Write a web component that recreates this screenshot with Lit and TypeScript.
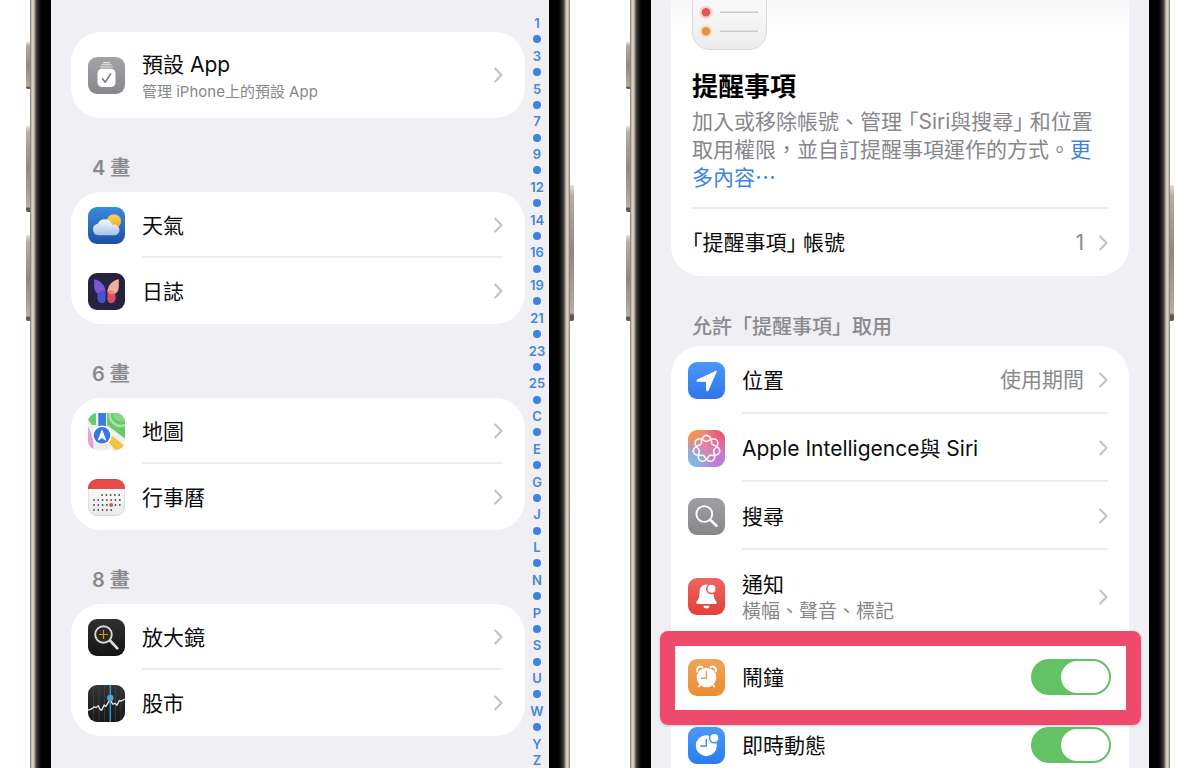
import { LitElement, html, svg, css, nothing, TemplateResult, SVGTemplateResult } from "lit";
import { customElement, property } from "lit/decorators.js";

/* Seven-lobed knot, traced twice around its centre. */
const knotPath = (() => {
  const points: string[] = [];
  const steps = 280;
  for (let i = 0; i < steps; i++) {
    const angle = (i / steps) * Math.PI * 4;
    const radius = 10.4 + 3 * Math.cos(3.5 * angle);
    const x = 18.5 + radius * Math.sin(angle);
    const y = 18.8 - radius * Math.cos(angle);
    points.push(`${x.toFixed(2)} ${y.toFixed(2)}`);
  }
  return `M${points.join("L")}Z`;
})();

const calendarDots = (() => {
  const rows = [[14, 17], [6, 22], [6, 27], [6, 32]];
  const dots: SVGTemplateResult[] = [];
  rows.forEach(([start, y], row) => {
    for (let x = start; x <= 32; x += 4.3) {
      if (row === 3 && x > 25) break;
      const today = row === 2 && Math.abs(x - 23.2) < 1;
      dots.push(svg`<circle cx=${x} cy=${y - 1} r=${today ? 2 : 0.9} fill=${today ? "#e0514d" : "#4a4a4c"}></circle>`);
    }
  });
  return dots;
})();

const tile = (fill: string) => svg`<rect width="37" height="37" rx="9" fill=${fill}></rect>`;

const icons: Record<string, SVGTemplateResult> = {
  defaults: svg`
    <linearGradient id="g" x2="0" y2="1"><stop stop-color="#a3a3a7"></stop><stop offset="1" stop-color="#88888c"></stop></linearGradient>
    ${tile("url(#g)")}
    <path d="M15.500 5.600h6M13.800 7.800h9.400M12.300 10h12.400" stroke="#fff" stroke-width="1.100" stroke-linecap="round" opacity=".75"></path>
    <rect x="9.500" y="11.700" width="18" height="18.300" rx="4.500" fill="#fff"></rect>
    <path d="M14.500 21.700l2.800 3.500 5.300-8.200" fill="none" stroke="#77777b" stroke-width="1.500" stroke-linecap="round" stroke-linejoin="round"></path>`,
  weather: svg`
    <linearGradient id="g" x2="0" y2="1"><stop stop-color="#3a8bdc"></stop><stop offset="1" stop-color="#1c4fa6"></stop></linearGradient>
    <linearGradient id="c" x2="0" y2="1"><stop stop-color="#fff"></stop><stop offset="1" stop-color="#abc5ec"></stop></linearGradient>
    <linearGradient id="s" x2="0" y2="1"><stop stop-color="#f9d45b"></stop><stop offset="1" stop-color="#edaa35"></stop></linearGradient>
    ${tile("url(#g)")}
    <circle cx="26" cy="14.200" r="7" fill="url(#s)"></circle>
    <path d="M10.500 28.200a5.800 5.800 0 0 1-.7-11.500 7.700 7.700 0 0 1 14.500 1.300 5.300 5.300 0 1 1 1.200 10.200z" fill="url(#c)" opacity=".96"></path>`,
  journal: svg`
    ${tile("#25233d")}
    <path d="M17.600 18.500C17.200 12.500 12.700 7 6.200 6.200v7.300c0 4 1.700 6.500 4.300 7.500 2.500.7 5.600.4 7.100-2.500z" fill="#7a55d8"></path>
    <path d="M17.600 18.500c-2.600-2-8-.6-8.300 5.500-.2 4.700 3 6.900 5.900 6 1.900-.7 2.400-2.400 2.400-4.500z" fill="#3f57d3"></path>
    <path d="M19.400 18.500C19.800 12.500 24.300 7 30.800 6.200v7.300c0 4-1.700 6.500-4.300 7.500-2.500.7-5.600.4-7.100-2.500z" fill="#f1ae9f"></path>
    <path d="M19.400 18.500c2.600-2 8-.6 8.300 5.500.2 4.700-3 6.900-5.900 6-1.900-.7-2.400-2.400-2.400-4.500z" fill="#d84d61"></path>
    <path d="M19.400 18.500c1.600-1.200 4.400-1.200 6.300.6l1 1.900c-2.700.7-5.800.4-7.300-2.500z" fill="#ee8583"></path>
    <path d="M17.600 18.500c-1.600-1.200-4.400-1.200-6.300.6l-1 1.900c2.700.7 5.800.4 7.300-2.500z" fill="#5b48c9"></path>`,
  maps: svg`
    <clipPath id="k">${tile("#000")}</clipPath>
    <g clip-path="url(#k)">
      <rect width="37" height="37" fill="#eeeeec"></rect>
      <path d="M19 0h18v25.500L19 12z" fill="#68c96d"></path>
      <path d="M0 0h8v12H4L0 7z" fill="#68c96d"></path>
      <path d="M22 0a11 11 0 0 0 15 12" fill="none" stroke="#a9e2a6" stroke-width="2.500"></path>
      <path d="M25 0a8 8 0 0 0 12 7.500V0z" fill="#8ad58b"></path>
      <path d="M10.300 0h7.700v15h-7.700z" fill="#3b7ee2"></path>
      <path d="M0 13.500c3 5 5.500 12 5.500 23.500H0z" fill="#e6a0dd"></path>
      <path d="M23 22l13 10-2 5H19l-1-8z" fill="#f3c443"></path>
      <path d="M18 12.500L37 27v6L17 17z" fill="#f4f3f1"></path>
      <path d="M19 27l8 10h-8z" fill="#f4f3f1"></path>
      <circle cx="14" cy="22.300" r="9.800" fill="#fff"></circle>
      <circle cx="14" cy="22.300" r="8.300" fill="#3478e0"></circle>
      <path d="M14 16.200l4.200 10.600c.2.600-.3.900-.8.600L14 25l-3.400 2.400c-.5.300-1 0-.8-.6z" fill="#fff"></path>
    </g>`,
  calendar: svg`
    <linearGradient id="g" x2="0" y2="1"><stop stop-color="#fff"></stop><stop offset="1" stop-color="#e9e9e9"></stop></linearGradient>
    ${tile("url(#g)")}
    <path d="M0 10V9a9 9 0 0 1 9-9h19a9 9 0 0 1 9 9v1z" fill="#e64b48"></path>
    <rect x=".500" y=".500" width="36" height="36" rx="8.500" fill="none" stroke="#000" stroke-opacity=".08"></rect>
    ${calendarDots}`,
  magnifier: svg`
    <linearGradient id="g" x2="0" y2="1"><stop stop-color="#303030"></stop><stop offset="1" stop-color="#141414"></stop></linearGradient>
    ${tile("url(#g)")}
    <path d="M22 21.500l7.300 7.800" stroke="#dcdcdc" stroke-width="2.700" stroke-linecap="round"></path>
    <circle cx="15.500" cy="15.500" r="8.300" fill="#2c281d" stroke="#d9d9d9" stroke-width="1.900"></circle>
    <path d="M15.500 11v9M11 15.500h9" stroke="#c89b2d" stroke-width="1.200"></path>`,
  stocks: svg`
    <linearGradient id="g" x2="0" y2="1"><stop stop-color="#333436"></stop><stop offset="1" stop-color="#161617"></stop></linearGradient>
    ${tile("url(#g)")}
    <path d="M5.500 1v35M11 0v37M16.500 0v37M27.500 0v37M33 2v33" stroke="#4b4c4f" stroke-width=".800" opacity=".7"></path>
    <path d="M22.300 0v37" stroke="#3b94c9" stroke-width="1.500"></path>
    <path d="M0 25l2.500-.6 1.700-1 2-1.600 2 .8 2-2 1.600 3.500 1.700 1.300 2.800-5.500 1.700 1.500 2.600-4.500 1.600-2.300 2.600 4.600 2.600-.8 1.400 2 2.700-5 1.600.7L37 14" fill="none" stroke="#e4e4e4" stroke-width="1.300" stroke-linejoin="round"></path>
    <circle cx="22.300" cy="13" r="3.200" fill="#4aa7da"></circle>`,
  location: svg`
    <linearGradient id="g" x2="0" y2="1"><stop stop-color="#4a97f8"></stop><stop offset="1" stop-color="#2f76ea"></stop></linearGradient>
    ${tile("url(#g)")}
    <path d="M27.500 9L9.300 17.400c-1.300.7-1.100 2.200.4 2.300l8.200.3.300 8c.1 1.500 1.700 1.800 2.300.4L28.600 10c.3-.8-.3-1.400-1.100-1z" fill="#fff"></path>`,
  intelligence: svg`
    <linearGradient id="g" x2="1" y2="1"><stop stop-color="#f0a13c"></stop><stop offset=".4" stop-color="#ea8290"></stop><stop offset="1" stop-color="#b376f0"></stop></linearGradient>
    <radialGradient id="b" cx="0" cy="1" r=".8"><stop stop-color="#62cdf2"></stop><stop offset=".5" stop-color="#84b2e4" stop-opacity=".8"></stop><stop offset="1" stop-color="#9f9ed8" stop-opacity="0"></stop></radialGradient>
    <radialGradient id="r" cx="1" cy="0" r=".6"><stop stop-color="#ea4a6d"></stop><stop offset="1" stop-color="#ea4a6d" stop-opacity="0"></stop></radialGradient>
    ${tile("url(#g)")}${tile("url(#r)")}${tile("url(#b)")}
    <path d=${knotPath} fill="none" stroke="#fff" stroke-width="1.600" opacity=".92"></path>`,
  search: svg`
    <linearGradient id="g" x2="0" y2="1"><stop stop-color="#a0a0a4"></stop><stop offset="1" stop-color="#87878b"></stop></linearGradient>
    ${tile("url(#g)")}
    <circle cx="16.300" cy="16" r="7.900" fill="none" stroke="#fff" stroke-width="1.900"></circle>
    <path d="M22.200 21.800l6.300 6" stroke="#fff" stroke-width="2.600" stroke-linecap="round"></path>`,
  notifications: svg`
    <linearGradient id="g" x2="0" y2="1"><stop stop-color="#ef6561"></stop><stop offset="1" stop-color="#e23f38"></stop></linearGradient>
    ${tile("url(#g)")}
    <path d="M18.500 6.500c-5 0-6.800 3.600-7 8.200-.2 5-1 6.500-2.600 8.400-1.200 1.400-.7 3 .8 3h17.600c1.500 0 2-1.600.8-3-1.600-1.900-2.400-3.400-2.600-8.400-.2-4.600-2-8.200-7-8.200z" fill="#fff"></path>
    <path d="M15.500 27.700h6a3 2.700 0 0 1-6 0z" fill="#fff"></path>
    <circle cx="23.500" cy="10.800" r="5.500" fill="#eb5853"></circle>
    <circle cx="23.500" cy="10.800" r="4" fill="#fff"></circle>`,
  alarm: svg`
    <linearGradient id="g" x2="0" y2="1"><stop stop-color="#f0a455"></stop><stop offset="1" stop-color="#eb8c33"></stop></linearGradient>
    ${tile("url(#g)")}
    <path d="M9.300 12.300a3.500 3.500 0 0 1 5-4.300M27.700 12.300a3.500 3.500 0 0 0-5-4.300" fill="none" stroke="#fff" stroke-width="2" stroke-linecap="round"></path>
    <circle cx="18.500" cy="18.500" r="9.800" fill="#fff"></circle>
    <path d="M12.500 25.500l-1.700 2M24.500 25.500l1.700 2" stroke="#fff" stroke-width="1.700" stroke-linecap="round"></path>
    <path d="M18.500 12.500v6.700h-5" fill="none" stroke="#ee9844" stroke-width="1.400" stroke-linecap="round" stroke-linejoin="round"></path>`,
  live: svg`
    <linearGradient id="g" x2="0" y2="1"><stop stop-color="#4a99f8"></stop><stop offset="1" stop-color="#2b7cf0"></stop></linearGradient>
    ${tile("url(#g)")}
    <circle cx="18.300" cy="18.700" r="10.500" fill="#fff"></circle>
    <path d="M18.300 12.500v6.500h-5.500" fill="none" stroke="#3a89f5" stroke-width="1.400" stroke-linecap="round" stroke-linejoin="round"></path>
    <circle cx="26.300" cy="11" r="5.500" fill="#4291f7"></circle>
    <circle cx="26.300" cy="11" r="4" fill="#fff"></circle>`,
};

const base = css`
  * { box-sizing: border-box; }
`;

@customElement("settings-row")
class SettingsRow extends LitElement {
  @property() icon = "";
  @property() label = "";
  @property() detail = "";
  @property() value = "";
  @property({ type: Boolean }) toggle = false;
  @property({ type: Boolean }) highlighted = false;

  static styles = [base, css`
    :host { display: block; position: relative; color: #0c0c0d; }
    .row {
      display: flex; align-items: stretch; min-height: var(--row-height, 66px);
      padding-left: 17px; color: inherit; text-decoration: none;
    }
    .icon { width: 37px; height: 37px; flex: none; align-self: center; margin-right: 17px; }
    .body {
      flex: 1; display: flex; align-items: center; margin-right: var(--row-end, 22px);
      border-bottom: 2px solid #ececee; border-top: 2px solid transparent;
    }
    :host(.last) .body, :host(.plain) .body { border-bottom-color: transparent; }
    .texts { flex: 1; padding-top: var(--text-drop, 2px); font-size: 21px; line-height: 28px; }
    .label { display: block; }
    .detail { display: block; font-size: var(--detail-size, 15px); line-height: 26px; color: #87878b; }
    .value { font-size: 21px; line-height: 28px; color: #8a8a8e; margin-right: 15px; }
    .chevron { width: 9px; height: 16px; flex: none; }
    .toggle {
      appearance: none; flex: none; width: 80px; height: 36px; margin: 0 -3px 0 0; padding: 2px;
      border-radius: 18px; background: #62c265; display: flex; justify-content: flex-end;
    }
    .toggle::before { content: ""; width: 48px; height: 32px; border-radius: 16px; background: #fff; }
    .toggle:not(:checked) { background: #e3e3e6; justify-content: flex-start; }
    .marker {
      position: absolute; z-index: 2; inset: -12px -12px -14px -11px; pointer-events: none;
      border: 15px solid #ee4b6c; border-radius: 8px; box-shadow: 0 1px 3px rgba(0, 0, 0, 0.18);
    }
  `];

  render() {
    const glyph = html`<svg class="icon" viewBox="0 0 37 37" aria-hidden="true">${icons[this.icon]}</svg>`;
    const detail = this.detail ? html`<span class="detail">${this.detail}</span>` : nothing;
    if (this.toggle) {
      return html`
        <div class="row">
          ${glyph}
          <div class="body">
            <div class="texts"><label class="label" for="switch">${this.label}</label>${detail}</div>
            <input class="toggle" id="switch" type="checkbox" role="switch" checked />
          </div>
        </div>
        ${this.highlighted ? html`<div class="marker"></div>` : nothing}`;
    }
    return html`
      <a class="row" href="#">
        ${glyph}
        <div class="body">
          <div class="texts"><span class="label">${this.label}</span>${detail}</div>
          ${this.value ? html`<span class="value">${this.value}</span>` : nothing}
          ${chevron()}
        </div>
      </a>`;
  }
}

function chevron(): TemplateResult {
  return html`<svg class="chevron" viewBox="0 0 9 16" aria-hidden="true">
    <path d="M1.200 1.500l6.300 6.500-6.300 6.500" fill="none" stroke="#c2c2c5" stroke-width="2" stroke-linecap="round" stroke-linejoin="round"></path>
  </svg>`;
}

@customElement("phone-frame")
class PhoneFrame extends LitElement {
  static styles = [base, css`
    :host { display: flex; min-width: 0; min-height: 0; padding: 0 30px; }
    .rail {
      position: relative; flex: none; width: 21px;
      background: linear-gradient(90deg, #77716a 0, #a9a297 1px, #d8d1c6 2px, #cfc8bc 4px, #817a70 5px, #35322f 7px, #1c1b1a 9px, #000 11px);
    }
    .rail.right { transform: scaleX(-1); }
    .key {
      position: absolute; left: -4px; width: 4px; border-radius: 2px 0 0 2px;
      background: linear-gradient(#e4dfd4 0, #b5ad9f 8%, #8f887c 50%, #b5ad9f 94%, #5e574c 96%);
    }
    .action { top: 42px; height: 47px; }
    .up { top: 126px; height: 86px; }
    .down { top: 235px; height: 86px; }
    .power { top: 185px; height: 136px; }
    .screen { flex: 1; min-width: 0; overflow: hidden; background: #efeff4; }
  `];

  render() {
    return html`
      <div class="rail"><i class="key action"></i><i class="key up"></i><i class="key down"></i></div>
      <div class="screen"><slot></slot></div>
      <div class="rail right"><i class="key power"></i></div>`;
  }
}

const groups = [
  { title: "4 畫", rows: [["weather", "天氣"], ["journal", "日誌"]] },
  { title: "6 畫", rows: [["maps", "地圖"], ["calendar", "行事曆"]] },
  { title: "8 畫", rows: [["magnifier", "放大鏡"], ["stocks", "股市"]] },
];

const indexMarks = ["1", "3", "5", "7", "9", "12", "14", "16", "19", "21", "23", "25",
  "C", "E", "G", "J", "L", "N", "P", "S", "U", "W", "Y"];

@customElement("app-root")
class AppRoot extends LitElement {
  static styles = [base, css`
    :host {
      display: grid; grid-template-columns: 1fr 1fr; grid-template-rows: minmax(0, 1fr);
      height: 100vh; overflow: hidden; background: #fff;
      font-family: Inter, "Noto Sans CJK TC", sans-serif;
    }
    .apps { display: flex; height: 100%; padding-left: 20px; }
    .list { flex: 1; min-width: 0; padding-top: 32px; }
    .card { background: #fff; border-radius: 30px; }
    .featured { --row-height: 86px; --text-drop: 6px; }
    h2 { margin: 0; padding: 36px 21px 10px; font-size: 20px; line-height: 28px; font-weight: 600; color: #8a8a8e; }
    .index {
      flex: none; width: 24px; padding-top: 15px; display: flex; flex-direction: column;
      justify-content: space-between; align-items: center;
    }
    .mark { font-size: 13px; line-height: 16px; font-weight: 600; color: #4586d8; text-decoration: none; }
    .dot { height: 16px; display: flex; align-items: center; }
    .dot::before { content: ""; width: 8px; height: 8px; border-radius: 50%; background: #3c83e4; }

    .detail-page { padding: 0 20px; }
    .hero { border-radius: 0 0 30px 30px; background: linear-gradient(#f8f8fa, #fff 40px); padding: 0 21px; }
    .app-icon { display: block; width: 75px; height: 50px; }
    h1 { margin: 0; padding-top: 20px; font-size: 26px; line-height: 34px; font-weight: 700; color: #000; }
    .about { margin: 0; padding: 4px 0 15px; font-size: 21px; line-height: 28px; color: #87878b; border-bottom: 2px solid #ececee; }
    .more { color: #3c83e4; text-decoration: none; font-family: "Noto Sans CJK TC", sans-serif; line-height: 20px; }
    .half { font-feature-settings: "halt"; }
    .account {
      display: flex; align-items: center; height: 67px; font-size: 21px; line-height: 28px;
      color: #0c0c0d; text-decoration: none;
    }
    .name { flex: 1; }
    .count { color: #8a8a8e; margin-right: 15px; }
    .chevron { width: 9px; height: 16px; flex: none; }
    .access { padding: 37px 21px 5px; font-weight: 500; }
    .permissions { --row-height: 68px; --detail-size: 19px; --row-end: 21px; border-radius: 30px 30px 0 0; }
    .tall { --row-height: 93px; }
  `];

  render() {
    return html`
      <phone-frame>
        <div class="apps">
          <div class="list">
            <div class="card featured">
              <settings-row class="last" icon="defaults" label="預設 App" detail="管理 iPhone上的預設 App"></settings-row>
            </div>
            ${groups.map((group) => html`
              <h2>${group.title}</h2>
              <div class="card">
                ${group.rows.map(([icon, label], i) => html`
                  <settings-row class=${i === group.rows.length - 1 ? "last" : ""} icon=${icon} label=${label}></settings-row>`)}
              </div>`)}
          </div>
          <nav class="index">
            ${indexMarks.map((mark, i) => html`
              <a class="mark" href="#">${mark}</a>
              ${i < indexMarks.length - 1 ? html`<span class="dot"></span>` : nothing}`)}
            <a class="mark" href="#">Z</a>
          </nav>
        </div>
      </phone-frame>

      <phone-frame>
        <div class="detail-page">
          <div class="hero">
            <svg class="app-icon" viewBox="0 0 75 50" aria-hidden="true">
              <linearGradient id="paper" x2="0" y2="1"><stop stop-color="#fafafa"></stop><stop offset="1" stop-color="#ececec"></stop></linearGradient>
              <path d="M.500-1v33a17.500 17.500 0 0 0 17.500 17.500h39a17.500 17.500 0 0 0 17.500-17.500v-33z" fill="url(#paper)" stroke="#d9d9db"></path>
              <circle cx="14" cy="12.300" r="6.500" fill="#f7d3d0"></circle>
              <circle cx="14" cy="12.300" r="4.300" fill="#dc5a56"></circle>
              <circle cx="14" cy="31.300" r="6.500" fill="#f9e2c8"></circle>
              <circle cx="14" cy="31.300" r="4.300" fill="#e0923f"></circle>
              <path d="M28 12.200h38M28 31.200h38" stroke="#c9c9cb" stroke-width="1.600"></path>
            </svg>
            <h1>提醒事項</h1>
            <p class="about">加入或移除帳號、管理 <span class="half">「</span>Siri與搜尋<span class="half">」</span> 和位置取用權限，並自訂提醒事項運作的方式。<a class="more" href="#">更多內容⋯</a></p>
            <a class="account" href="#">
              <span class="name"><span class="half">「</span>提醒事項<span class="half">」</span> 帳號</span>
              <span class="count">1</span>
              ${chevron()}
            </a>
          </div>
          <h2 class="access">允許「提醒事項」取用</h2>
          <div class="card permissions">
            <settings-row icon="location" label="位置" value="使用期間"></settings-row>
            <settings-row icon="intelligence" label="Apple Intelligence與 Siri"></settings-row>
            <settings-row icon="search" label="搜尋"></settings-row>
            <settings-row class="tall plain" icon="notifications" label="通知" detail="橫幅、聲音、標記"></settings-row>
            <settings-row class="plain" icon="alarm" label="鬧鐘" toggle highlighted></settings-row>
            <settings-row class="last" icon="live" label="即時動態" toggle></settings-row>
          </div>
        </div>
      </phone-frame>`;
  }
}
